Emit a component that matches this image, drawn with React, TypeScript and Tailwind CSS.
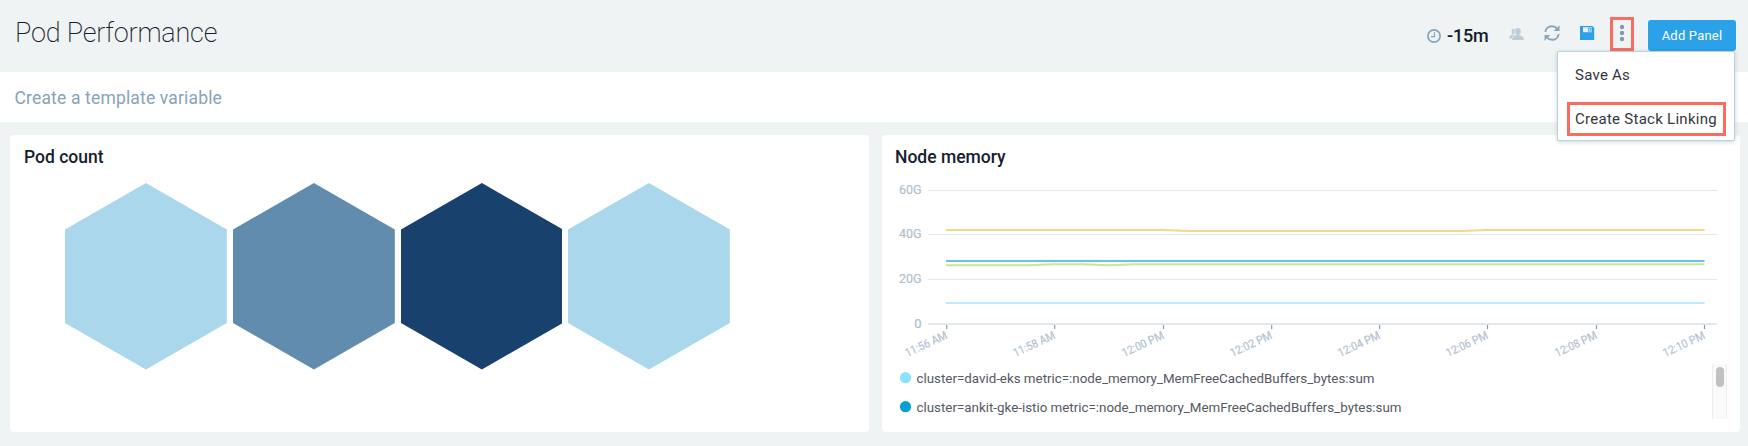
import React from "react";

const HEX_COLORS = ["#aad7ec", "#628cae", "#19416d", "#aad7ec"];

const GRID = [
  { y: 190.5, label: "60G" },
  { y: 234.5, label: "40G" },
  { y: 279.5, label: "20G" },
  { y: 324, label: "0" },
];

const TICKS = [
  { x: 946.7, label: "11:56 AM" },
  { x: 1054.7, label: "11:58 AM" },
  { x: 1163.5, label: "12:00 PM" },
  { x: 1271.7, label: "12:02 PM" },
  { x: 1379.6, label: "12:04 PM" },
  { x: 1487.5, label: "12:06 PM" },
  { x: 1596.5, label: "12:08 PM" },
  { x: 1704.5, label: "12:10 PM" },
];

const SERIES = [
  { color: "#b9ecfe", points: "946,303 1704.5,303" },
  { color: "#66c4e5", points: "946,261 1704.5,261" },
  { color: "#cbe597", points: "946,265.2 1028,265.2 1054,264.3 1082,264.3 1109,265.2 1136,264.3 1704.5,264.3" },
  { color: "#efd98a", points: "946,230 1163,230 1190,231 1463,231 1487,230 1704.5,230" },
];

const LEGEND = [
  { color: "#8be3ff", width: 458, text: "cluster=david-eks metric=:node_memory_MemFreeCachedBuffers_bytes:sum" },
  { color: "#05a0d8", width: 485, text: "cluster=ankit-gke-istio metric=:node_memory_MemFreeCachedBuffers_bytes:sum" },
];

function ClockIcon() {
  return (
    <svg width="14" height="14" viewBox="0 0 14 14" fill="none" stroke="#8aa2bb">
      <circle cx="7" cy="7" r="6.1" strokeWidth="1.7" />
      <path d="M7.5 3.2V7.6H4" strokeWidth="1.2" />
    </svg>
  );
}

function UsersIcon() {
  return (
    <svg width="15" height="12" viewBox="0 0 15 12" fill="#bfcbd8">
      <ellipse cx="4.9" cy="3.4" rx="2.2" ry="2.7" />
      <path d="M0 10.5C0 8 1.500 7 4 6.500L6 7.200C4 8 3 8.800 2.600 10.500z" />
      <ellipse cx="8.9" cy="3.4" rx="3.300" ry="3.900" stroke="#eff3f4" strokeWidth="0.8" />
      <path d="M3 12C3 9 5 8 7.700 7.100V5.500h2.500v1.600C13 8 15 9 15 12z" />
    </svg>
  );
}

function RefreshIcon() {
  return (
    <svg width="16" height="16" viewBox="0 0 16 16">
      <g fill="none" stroke="#8ca3b8" strokeWidth="1.900">
        <path d="M1.300 7C1.700 3.600 4.500 1.200 7.900 1.200c2.300 0 4.100 1 5.500 2.700" />
        <path d="M14.700 9C14.300 12.400 11.500 14.800 8.100 14.800c-2.300 0-4.100-1-5.500-2.700" />
      </g>
      <path d="M15.500.2V6H9.700z" fill="#8ca3b8" />
      <path d="M.5 15.800V10h5.800z" fill="#8ca3b8" />
    </svg>
  );
}

function SaveIcon() {
  return (
    <svg width="15" height="15" viewBox="0 0 15 15">
      <path d="M0 1h12.300L14.200 2.900V15H0z" fill="#2aa1e8" />
      <path d="M3 2.200h8.500v5H3z" fill="#e9f2f8" />
      <path d="M8 2.700h2.700v3.900H8z" fill="#2aa1e8" />
      <path d="M8.700 3.400h1.200v2.500H8.700z" fill="#d5ebf8" />
    </svg>
  );
}

function MoreIcon() {
  return (
    <svg width="6" height="18" viewBox="0 0 6 18" fill="#8299b0">
      <circle cx="3" cy="3" r="2.200" />
      <circle cx="3" cy="9" r="2.200" />
      <circle cx="3" cy="15" r="2.200" />
    </svg>
  );
}

function Header() {
  return (
    <header className="flex h-[72px] items-start justify-between pl-[15px] pr-3">
      <h1 className="pt-[14.5px] text-[27px] leading-9 font-extralight tracking-[-0.2px] text-[#16202e]">Pod Performance</h1>
      <div className="flex items-start">
        <div className="mt-[29px]"><ClockIcon /></div>
        <span className="mt-6 ml-[6px] w-[42px] text-[18px] leading-6 font-medium tracking-[-0.2px] whitespace-nowrap text-[#111c2b]">-15m</span>
        <div className="mt-[28px] ml-5"><UsersIcon /></div>
        <div className="mt-[25px] ml-5"><RefreshIcon /></div>
        <div className="mt-[25px] ml-5"><SaveIcon /></div>
        <div className="relative mt-[17px] ml-[15px]">
          <button className="flex h-[34px] w-6 items-center justify-center border-[3px] border-[#fb6c60] pb-[3px]">
            <MoreIcon />
          </button>
          <div className="absolute top-[34px] right-[-101px] z-10 flex h-[90px] w-[178.5px] flex-col rounded-[2px] border border-[#bdcfde] bg-white text-[15px] leading-5 text-[#33373d] shadow-[0_1px_4px_rgba(60,90,120,0.25)]">
            <div className="mt-[13px] ml-[17.500px] tracking-[0.250px]">Save As</div>
            <div className="mt-[17px] ml-[9px] flex h-[34px] w-[159px] items-center border-3 border-[#fb6c60] pl-[5.500px] tracking-[0.270px] whitespace-nowrap">
              Create Stack Linking
            </div>
          </div>
        </div>
        <button className="mt-5 ml-[14px] h-[31px] w-[88px] rounded-[3px] bg-[#2aa1e8] text-[13px] tracking-[0.200px] whitespace-nowrap text-white">Add Panel</button>
      </div>
    </header>
  );
}

function PodCount() {
  return (
    <section className="h-[297px] w-[859px] rounded-[4px] bg-white">
      <h2 className="pt-[10px] pl-[14px] text-[17.5px] leading-6 font-medium text-[#16202e]">Pod count</h2>
      <div className="mt-[13.500px] ml-[55px] flex gap-[6px]">
        {HEX_COLORS.map((color, i) => (
          <svg key={i} width="161.800" height="187" viewBox="0 0 162 187" preserveAspectRatio="none">
            <polygon points="81,0 162,46.500 162,140 81,186.500 0,140 0,46.500" fill={color} />
          </svg>
        ))}
      </div>
    </section>
  );
}

function NodeMemory() {
  return (
    <section className="h-[297px] w-[858px] rounded-[4px] bg-white">
      <h2 className="pt-[10px] pl-[13px] text-[17.5px] leading-6 font-medium text-[#16202e]">Node memory</h2>
      <svg className="block" width="858" height="195" viewBox="882 169 858 195">
        {GRID.map((g) => (
          <g key={g.label}>
            <line x1="928" x2="1717" y1={g.y} y2={g.y} stroke="#e1e8ee" strokeWidth={g.label === "0" ? 2 : 1} />
            <text x="921.500" y={g.y + 3.500} textAnchor="end" fontSize="13" fill="#b0bfce" stroke="#b0bfce" strokeWidth="0.200" textLength={g.label === "0" ? undefined : 22.5} lengthAdjust="spacingAndGlyphs">{g.label}</text>
          </g>
        ))}
        {TICKS.map((t) => (
          <g key={t.label}>
            <line x1={t.x} x2={t.x} y1="325" y2="329" stroke="#999" strokeWidth="1.200" />
            <text transform={`translate(${t.x + 1.300} 338) rotate(-25)`} textAnchor="end" fontSize="11.500" textLength="45" lengthAdjust="spacingAndGlyphs" fill="#b3c1d0" stroke="#b3c1d0" strokeWidth="0.200">{t.label}</text>
          </g>
        ))}
        {SERIES.map((s) => (
          <polyline key={s.color} points={s.points} fill="none" stroke={s.color} strokeWidth="2" />
        ))}
      </svg>
      <div className="flex h-[55px] justify-between pr-[13px] pl-[18px]">
        <ul className="flex flex-col">
          {LEGEND.map((l) => (
            <li key={l.color} className="flex h-[29px] items-center">
              <svg width="520" height="29" viewBox="0 0 520 29">
                <circle cx="5.500" cy="13.700" r="5.600" fill={l.color} />
                <text x="16.500" y="19" fontSize="13.500" textLength={l.width} lengthAdjust="spacingAndGlyphs" fill="#555963">{l.text}</text>
              </svg>
            </li>
          ))}
        </ul>
        <div className="flex h-[55px] w-[15px] justify-center border-x border-[#eeeeee] bg-[#fafafa] pt-[3px]">
          <div className="h-5 w-2 rounded-full bg-[#c1c1c1]" />
        </div>
      </div>
    </section>
  );
}

export default function App() {
  return (
    <div className="h-[446px] w-[1748px] overflow-hidden bg-[#eff3f4] font-[Roboto,sans-serif]">
      <Header />
      <div className="flex h-[50px] items-center bg-white pt-[2px] pl-[14.5px] text-[17.5px] tracking-[0.160px] text-[#8aa2bb]">Create a template variable</div>
      <main className="flex gap-[13px] pt-[13px] pl-[10px]">
        <PodCount />
        <NodeMemory />
      </main>
    </div>
  );
}
